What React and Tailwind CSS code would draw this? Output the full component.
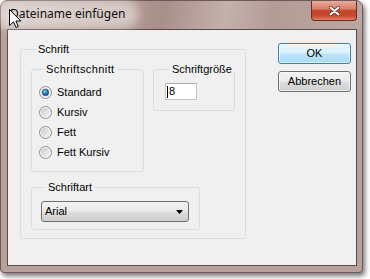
const Radio = ({ checked }) => (
  <svg width="13" height="13" viewBox="0 0 13 13" className="shrink-0">
    <defs>
      <linearGradient id={checked ? "rg1" : "rg0"} x1="0" y1="0" x2="1" y2="1">
        <stop offset="0" stopColor="#c9c9c9" />
        <stop offset="1" stopColor="#f8f8f8" />
      </linearGradient>
      <radialGradient id="dot" cx="0.4" cy="0.35" r="0.7">
        <stop offset="0" stopColor="#9fd6f7" />
        <stop offset="0.45" stopColor="#2f86c6" />
        <stop offset="1" stopColor="#0c3f73" />
      </radialGradient>
    </defs>
    <circle cx="6.5" cy="6.5" r="6" fill="#f4f4f4" stroke="#8c8c8c" />
    <circle cx="6.5" cy="6.5" r="4.5" fill={`url(#${checked ? "rg1" : "rg0"})`} />
    {checked && <circle cx="6.5" cy="6.5" r="3.2" fill="url(#dot)" stroke="#1b4f7e" strokeWidth="0.6" />}
  </svg>
)

const Group = ({ label, className, children }) => (
  <fieldset className={`border border-[#d5dfe5] rounded-[3px] ${className}`}>
    <legend className="ml-[5px] px-[2px] leading-[13px]">{label}</legend>
    {children}
  </fieldset>
)

export default function App() {
  const styles = ["Standard", "Kursiv", "Fett", "Fett Kursiv"]
  return (
    <div className="relative w-[370px] h-[279px] overflow-hidden bg-white font-['Liberation_Sans',Arial,sans-serif] text-[11px] leading-[13px] text-black">
      <div className="w-[363px] h-[273px] flex flex-col rounded-t-[7px] rounded-b-[4px] border border-[#6d5a56] bg-[#b8a19b] shadow-[2px_3px_5px_rgba(0,0,0,0.55)]">
        {/* title bar */}
        <div className="h-[28px] flex items-start justify-between rounded-t-[6px] bg-[linear-gradient(100deg,#c6b3ae_0%,#b59e98_30%,#a98f89_45%,#c4b1ac_62%,#b49c96_75%,#bca6a0_100%)]">
          <div className="ml-[9px] mt-[5px] relative">
            <span className="absolute -inset-x-[6px] inset-y-[1px] rounded-full bg-white/45 shadow-[0_0_10px_8px_rgba(255,255,255,0.45)]" />
            <span className="relative font-['Noto_Sans',sans-serif] text-[12px] leading-[16px] text-[#101010]">
              Dateiname einfügen
            </span>
          </div>
          <div className="mr-[5px] w-[46px] h-[20px] flex items-center justify-center rounded-b-[4px] border border-t-0 border-[#6e2a1e] bg-[linear-gradient(180deg,#e9ab9a_0%,#d7806a_40%,#c2412a_52%,#c84a30_78%,#e08168_100%)]">
            <svg width="11" height="10" viewBox="0 0 11 10">
              <path d="M1.5 1.5 L9.5 8.5 M9.5 1.5 L1.5 8.5" stroke="#5a2a22" strokeWidth="3.6" strokeLinecap="round" />
              <path d="M1.5 1.5 L9.5 8.5 M9.5 1.5 L1.5 8.5" stroke="#ffffff" strokeWidth="2" strokeLinecap="round" />
            </svg>
          </div>
        </div>

        {/* frame body */}
        <div className="flex-1 flex pl-[6px] pr-[5px] pb-[6px]">
          <div className="flex-1 flex items-start border border-[#5b4b48] bg-[#f0f0f0] pl-[12px] pt-[13px]">
            <Group label="Schrift" className="w-[220px] px-[10px] pt-[7px] pb-[8px]">
              <div className="flex items-start gap-[9px]">
                <Group label="Schriftschnitt" className="w-[113px] pt-[6px] pb-[9px] pl-[7px] tracking-[0.4px]">
                  {styles.map((s, i) => (
                    <div key={s} className="h-[20px] flex items-center gap-[5px] tracking-normal">
                      <Radio checked={i === 0} />
                      <span>{s}</span>
                    </div>
                  ))}
                </Group>
                <Group label="Schriftgröße" className="w-[76px] pt-[7px] pb-[10px] pl-[11px]">
                  <div className="w-[32px] h-[17px] flex items-center pl-[1px] bg-white border border-[#c2c6cc] border-t-[#abadb3]">
                    <span className="w-px h-[12px] bg-black" />
                    <span className="ml-px">8</span>
                  </div>
                </Group>
              </div>
              <Group label="Schriftart" className="w-[169px] mt-[9px] pt-[7px] pb-[7px] pl-[9px]">
                <div className="w-[148px] h-[21px] flex items-center justify-between pl-[3px] pr-[5px] rounded-[3px] border border-[#707070] bg-[linear-gradient(180deg,#f2f2f2_0%,#ebebeb_48%,#dddddd_52%,#cfcfcf_100%)]">
                  <span>Arial</span>
                  <svg width="7" height="4" viewBox="0 0 7 4">
                    <path d="M0 0 H7 L3.5 4 Z" fill="#000" />
                  </svg>
                </div>
              </Group>
            </Group>

            <div className="ml-[32px] flex flex-col gap-[7px]">
              <button className="w-[73px] h-[21px] rounded-[3px] border border-[#3c7fb1] bg-[linear-gradient(180deg,#eaf6fd_0%,#d9f0fc_48%,#bee6fd_52%,#a7d9f5_100%)] shadow-[inset_0_0_0_1px_rgba(255,255,255,0.6)] text-[11px] leading-[13px]">
                OK
              </button>
              <button className="w-[73px] h-[21px] rounded-[3px] border border-[#707070] bg-[linear-gradient(180deg,#f2f2f2_0%,#ebebeb_48%,#dddddd_52%,#cfcfcf_100%)] shadow-[inset_0_0_0_1px_rgba(255,255,255,0.6)] text-[11px] leading-[13px]">
                Abbrechen
              </button>
            </div>
          </div>
        </div>
      </div>

      {/* mouse pointer */}
      <svg className="absolute left-[9px] top-[9px]" width="13" height="20" viewBox="0 0 13 20">
        <path d="M0.5 0.5 L0.5 16.5 L4.5 12.8 L7 18.5 L9.3 17.5 L6.9 12 L11.8 12 Z" fill="#fff" stroke="#000" strokeWidth="1" strokeLinejoin="miter" />
      </svg>
    </div>
  )
}
